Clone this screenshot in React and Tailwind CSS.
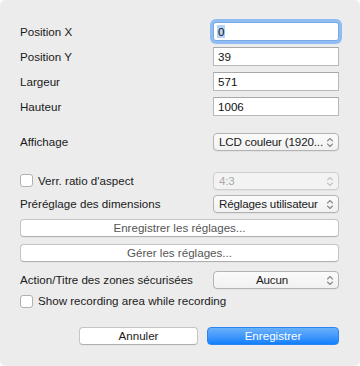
import React from "react";

function Chevrons({ disabled }) {
  return (
    <svg width="8" height="11" viewBox="0 0 8 11" className="shrink-0">
      <path d="M1.5 4 L4 1.5 L6.5 4" fill="none" stroke={disabled ? "#c4c4c4" : "#8a8a8a"} strokeWidth="1.1" strokeLinecap="round" strokeLinejoin="round" />
      <path d="M1.5 7 L4 9.5 L6.5 7" fill="none" stroke={disabled ? "#c4c4c4" : "#8a8a8a"} strokeWidth="1.1" strokeLinecap="round" strokeLinejoin="round" />
    </svg>
  );
}

function Field({ value, focused }) {
  if (focused) {
    return (
      <div className="w-[126px] h-[19px] rounded-[3px] bg-white ring-[3px] ring-[#8fbcf3] border border-[#7aa9e6] flex items-center pl-[3px]">
        <span className="bg-[#b3d3f9] leading-[13px] px-[1px] text-[#111]">{value}</span>
      </div>
    );
  }
  return (
    <div className="w-[126px] h-[19px] bg-white border border-[#b8b8b8] border-t-[#a8a8a8] flex items-center pl-[4px] text-[#111]">
      {value}
    </div>
  );
}

function Select({ value, disabled, center }) {
  return (
    <div
      className={`w-[126px] h-[18px] rounded-[4px] border ${disabled ? "border-[#d0d0d0] bg-[#f3f3f3] text-[#a9a9a9]" : "border-[#b3b3b3] bg-gradient-to-b from-[#fbfbfb] to-[#f1f1f1] text-[#1a1a1a]"} shadow-[0_0.5px_0.5px_rgba(0,0,0,0.08)] flex items-center pl-[5px] pr-[4px] gap-[1px]`}
    >
      <span className={`flex-1 whitespace-nowrap tracking-[-0.15px] ${center ? "text-center" : ""}`}>{value}</span>
      <Chevrons disabled={disabled} />
    </div>
  );
}

function Button({ children, className = "" }) {
  return (
    <div className={`h-[18px] rounded-[4px] border border-[#c4c4c4] border-b-[#b0b0b0] bg-white flex items-center justify-center shadow-[0_0.5px_0.5px_rgba(0,0,0,0.06)] ${className}`}>
      {children}
    </div>
  );
}

function Checkbox() {
  return <div className="w-[13px] h-[13px] rounded-[3px] border border-[#b0b0b0] bg-white shrink-0" />;
}

export default function App() {
  return (
    <div
      className="w-[360px] h-[366px] bg-[#ececec] rounded-[5px] flex flex-col pl-[20px] pr-[21px] text-[11.6px] text-[#1a1a1a] overflow-hidden"
      style={{ fontFamily: '"Liberation Sans", Arial, sans-serif' }}
    >
      <div className="mt-[22px] flex flex-col gap-[6px]">
        <div className="flex items-center justify-between h-[19px]">
          <span>Position X</span>
          <Field value="0" focused />
        </div>
        <div className="flex items-center justify-between h-[19px]">
          <span>Position Y</span>
          <Field value="39" />
        </div>
        <div className="flex items-center justify-between h-[19px]">
          <span>Largeur</span>
          <Field value="571" />
        </div>
        <div className="flex items-center justify-between h-[19px]">
          <span>Hauteur</span>
          <Field value="1006" />
        </div>
      </div>

      <div className="mt-[17px] flex items-center justify-between h-[18px]">
        <span>Affichage</span>
        <Select value="LCD couleur (1920..." />
      </div>

      <div className="mt-[21px] flex items-center justify-between h-[18px]">
        <div className="flex items-center gap-[5px]">
          <Checkbox />
          <span>Verr. ratio d'aspect</span>
        </div>
        <Select value="4:3" disabled />
      </div>

      <div className="mt-[5px] flex items-center justify-between h-[18px]">
        <span>Préréglage des dimensions</span>
        <Select value="Réglages utilisateur" />
      </div>

      <Button className="mt-[6px] text-[#555]">Enregistrer les réglages...</Button>
      <Button className="mt-[7px] text-[#555]">Gérer les réglages...</Button>

      <div className="mt-[9px] flex items-center justify-between h-[18px]">
        <span>Action/Titre des zones sécurisées</span>
        <Select value="Aucun" center />
      </div>

      <div className="mt-[3px] flex items-center gap-[5px] h-[18px]">
        <Checkbox />
        <span>Show recording area while recording</span>
      </div>

      <div className="mt-[17px] flex justify-end gap-[9px]">
        <Button className="w-[119px]">Annuler</Button>
        <div className="w-[132px] h-[18px] rounded-[4px] bg-gradient-to-b from-[#69b1fa] to-[#0d7ffd] border border-[#2b86f5] flex items-center justify-center text-white">
          Enregistrer
        </div>
      </div>
    </div>
  );
}
